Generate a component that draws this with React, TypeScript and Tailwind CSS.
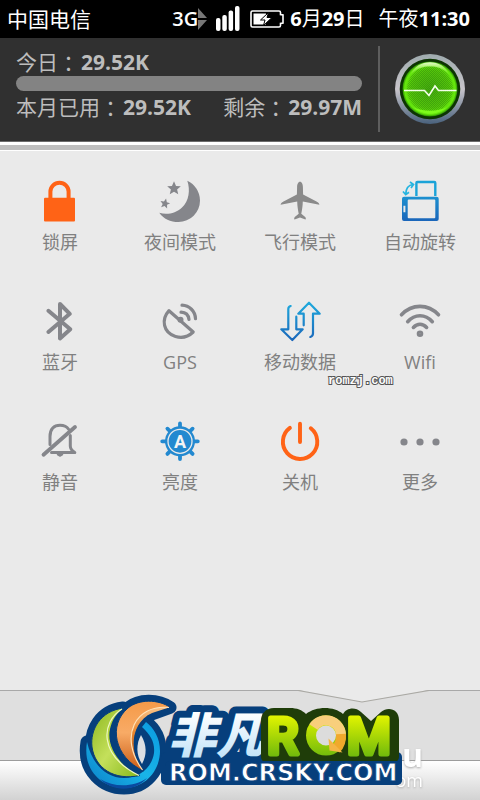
import type { ReactNode } from "react";

const GRAY = "#85868b";
const ORANGE = "#ff6316";

function Icon({ children }: { children: ReactNode }) {
  return (
    <svg viewBox="0 0 44 44" className="size-11" fill="none" aria-hidden="true">
      <defs>
        <linearGradient id="blue" x1="0" y1="0" x2="0" y2="44" gradientUnits="userSpaceOnUse">
          <stop offset="0" stopColor="#1fb0e0" />
          <stop offset="1" stopColor="#1a62b8" />
        </linearGradient>
      </defs>
      {children}
    </svg>
  );
}

const STAR =
  "M0-1L.28-.36 .95-.31 .43.13 .59.81 0 .45-.59.81-.43.13-.95-.31-.28-.36Z";

const toggles: { label: string; icon: ReactNode }[] = [
  {
    label: "锁屏",
    icon: (
      <>
        <rect x="6" y="18.7" width="31" height="23.8" rx="1" fill={ORANGE} />
        <path d="M12.4 20v-7.200a9.100 9.100 0 0 1 18.200 0V20" stroke={ORANGE} strokeWidth="4" />
      </>
    ),
  },
  {
    label: "夜间模式",
    icon: (
      <g fill={GRAY}>
        <path d="M29.300 1.700A22 22 0 0 1 42 21.500A21.500 21.500 0 0 1 20.500 43C12.500 43 5.500 40 1.300 33.700C9 36.500 18 34 24 28.500C31 22 32.500 11 29.300 1.700Z" />
        <path d={STAR} transform="translate(16 9.500) scale(7.200)" />
        <path d={STAR} transform="translate(7 24.700) rotate(12) scale(5.200)" />
      </g>
    ),
  },
  {
    label: "飞行模式",
    icon: (
      <path
        d="M22 2.700c1.900 0 2.900 2.600 2.900 5.300l.2 7.500 13.400 6.900c1.800 1 2.900 2 2.900 3.400l-16.600-3.200c-.1 5-.8 8.500-1.500 12.200l3.900 3.200c.8.8.8 2.200.2 2.600L22 38.500l-5.400 2.100c-.6-.4-.6-1.800.2-2.600l3.900-3.200c-.7-3.700-1.400-7.200-1.500-12.200L2.600 25.800c0-1.400 1.100-2.400 2.900-3.400l13.400-6.900.2-7.500c0-2.700 1-5.300 2.900-5.300Z"
        fill="#8a8a8a"
      />
    ),
  },
  {
    label: "自动旋转",
    icon: (
      <>
        <path
          fillRule="evenodd"
          d="M6 17.700h32.700a2 2 0 0 1 2 2V40a2 2 0 0 1-2 2H6a2 2 0 0 1-2-2V19.700a2 2 0 0 1 2-2ZM10.700 20.500a1 1 0 0 0-1 1v16.800a1 1 0 0 0 1 1h25.600a1 1 0 0 0 1-1V21.500a1 1 0 0 0-1-1ZM5.400 26.700v6.600h2v-6.600Z"
          fill="url(#blue)"
        />
        <path d="M18.400 17V4a1 1 0 0 1 1-1h16.900a1 1 0 0 1 1 1v13" stroke="#1ba3d8" strokeWidth="2.400" />
        <path d="M15 5.500C11 6 8 9.500 7.700 15M12 3l3.500 2.500L13 9M5 12.500l2.700 3.200 3.300-2.500" stroke="#25b4e0" strokeWidth="1.700" />
      </>
    ),
  },
  {
    label: "蓝牙",
    icon: (
      <path
        d="M10.400 11.800L32.300 30.300 22 39.400V5L31.800 14.800 10.400 33"
        stroke={GRAY}
        strokeWidth="4"
        strokeLinecap="round"
        strokeLinejoin="round"
      />
    ),
  },
  {
    label: "GPS",
    icon: (
      <g stroke={GRAY} strokeWidth="3.200" strokeLinecap="round" strokeLinejoin="round">
        <path d="M11 11.700L35.200 33C30 38 24 39.500 17.500 37.500C5 33.500 3 20.500 11 11.700Z" />
        <circle cx="22.500" cy="20.800" r="1.400" />
        <path d="M23 13.200c4.500.2 7.500 3 8 7.300M24 6.200c7.500.3 13.200 6 13.500 13.500" />
      </g>
    ),
  },
  {
    label: "移动数据",
    icon: (
      <path
        d="M12.700 7c-1.600.4-2.400 1.400-2.400 3v20.300h-7L14.300 41l10.400-10.700h-6.400V17.700M25.700 26.300V14.700h-5.400L31 3.700l10.700 11H35v19.600c0 2-.8 3.200-2.700 3.700"
        stroke="url(#blue)"
        strokeWidth="2.200"
        strokeLinecap="round"
        strokeLinejoin="round"
      />
    ),
  },
  {
    label: "Wifi",
    icon: (
      <g stroke={GRAY} strokeWidth="3.600" strokeLinecap="round">
        <path d="M3.500 15.800C14 4.600 30 4.600 40.500 15.800M9.700 22.700c7-8 17.600-8 24.600 0M15.400 28.400c4-4.200 9.200-4.200 13.200 0" />
        <circle cx="22" cy="34.700" r="1.500" />
      </g>
    ),
  },
  {
    label: "静音",
    icon: (
      <g stroke={GRAY} strokeWidth="3" strokeLinecap="round" strokeLinejoin="round">
        <path d="M12 25.500V17.500C12 10 16 6.200 22 6.200c4 0 7 1.500 8.600 4M32.300 16.500V27c0 3 2 5 4.500 6.600H13.500" />
        <path d="M19.500 35.600h5L22 37Z" fill={GRAY} strokeWidth="1.500" />
        <path d="M5.500 35.700L37 8" strokeWidth="3.800" />
      </g>
    ),
  },
  {
    label: "亮度",
    icon: (
      <>
        <path
          d="M22 4.500v35.600M4.200 22.300h35.600M9.400 9.700l25.200 25.200M34.600 9.700L9.400 34.900"
          stroke="#2389d0"
          strokeWidth="3.800"
          strokeLinecap="round"
        />
        <circle cx="22" cy="22.300" r="15" fill="#2389d0" />
        <circle cx="22" cy="22.300" r="12" stroke="#eaeaea" strokeWidth="1.300" />
        <text
          x="22"
          y="28.500"
          textAnchor="middle"
          fill="#f4f4f4"
          className="font-['Roboto',sans-serif] text-[18px] font-bold"
        >
          A
        </text>
      </>
    ),
  },
  {
    label: "关机",
    icon: (
      <path
        d="M11.900 8.900A17.200 17.200 0 1 0 32.800 9.300M22 4.800V23"
        stroke={ORANGE}
        strokeWidth="3.900"
        strokeLinecap="round"
      />
    ),
  },
  {
    label: "更多",
    icon: (
      <g fill={GRAY}>
        <circle cx="6" cy="23" r="3.600" />
        <circle cx="22" cy="23" r="3.600" />
        <circle cx="38" cy="23" r="3.600" />
      </g>
    ),
  },
];

function StatusBar() {
  return (
    <div className="flex h-[38px] items-center bg-black pr-[10px] pl-[7px] text-[20px] leading-6 text-white">
      <span className="text-[21px]">中国电信</span>
      <div className="ml-auto flex items-center">
        <span className="font-semibold">3G</span>
        <svg viewBox="0 0 10 22" className="h-[22px] w-[10px]" fill="#777" aria-hidden="true">
          <path d="M0 0l9 10H0ZM0 12h9L0 22Z" />
        </svg>
        <svg viewBox="0 0 24 26" className="ml-2 h-[26px] w-6" fill="#fff" aria-hidden="true">
          <rect x="0" y="12" width="4.500" height="13" rx="2" />
          <rect x="6.300" y="9" width="4.500" height="16" rx="2" />
          <rect x="12.600" y="4.500" width="4.500" height="20.500" rx="2" />
          <rect x="19" y="0" width="4.500" height="25" rx="2" />
        </svg>
        <svg viewBox="0 0 34 18" className="ml-[10px] h-[18px] w-[34px]" aria-hidden="true">
          <path d="M2.500 1H29a1.500 1.500 0 0 1 1.500 1.500V4.500L33 5v8l-2.500.5v2A1.500 1.500 0 0 1 29 17H2.500A1.500 1.500 0 0 1 1 15.500v-13A1.500 1.500 0 0 1 2.500 1Z" fill="none" stroke="#fff" strokeWidth="1.600" />
          <path d="M3.500 3.500h12.500v11H3.500Z" fill="#fff" />
          <path d="M18.500 2.500l-8 7.500h4.500l-1.500 5.500 8.500-8h-5Z" fill="#fff" stroke="#000" strokeWidth="1" />
        </svg>
        <span className="ml-[6px]">
          <b>6</b>月<b>29</b>日
        </span>
        <span className="ml-[14px]">
          午夜<b>11:30</b>
        </span>
      </div>
    </div>
  );
}

function PulseButton() {
  return (
    <button type="button" aria-label="流量监控" className="shrink-0 rounded-full">
      <svg viewBox="0 0 70 70" className="size-[70px]" aria-hidden="true">
        <defs>
          <linearGradient id="rim" x1="0" y1="0" x2="0" y2="1">
            <stop offset="0" stopColor="#9fabae" />
            <stop offset=".5" stopColor="#c9c5cb" />
            <stop offset="1" stopColor="#49617c" />
          </linearGradient>
          <radialGradient id="glow" cx=".5" cy=".5" r=".5">
            <stop offset="0" stopColor="#46ad10" />
            <stop offset=".7" stopColor="#55c60c" />
            <stop offset=".92" stopColor="#66ea0c" />
            <stop offset="1" stopColor="#2a8a04" />
          </radialGradient>
          <linearGradient id="shine" x1="0" y1="0" x2="0" y2="1">
            <stop offset="0" stopColor="#efffd8" stopOpacity=".95" />
            <stop offset="1" stopColor="#9df74a" stopOpacity="0" />
          </linearGradient>
          <pattern id="mesh" width="2" height="2" patternUnits="userSpaceOnUse">
            <rect width="1" height="1" fill="#1c6604" fillOpacity=".3" />
            <rect x="1" y="1" width="1" height="1" fill="#1c6604" fillOpacity=".3" />
          </pattern>
        </defs>
        <circle cx="35" cy="35" r="35" fill="url(#rim)" />
        <circle cx="35" cy="35" r="30.300" fill="#0d3503" />
        <circle cx="35" cy="35" r="27.500" fill="url(#glow)" />
        <circle cx="35" cy="35" r="23" fill="url(#mesh)" />
        <path d="M15 22C19 12 27 8.300 35 8.300S51 12 55 22C49 14 42 12.500 35 12.500S21 14 15 22Z" fill="url(#shine)" />
        <path d="M18 53c9 9 25 9 34 0-9 5-25 5-34 0Z" fill="#7dfb1b" />
        <path d="M9 36.500h20.500l4.500 5 6-9.500 3.500 4.500H61.500" fill="none" stroke="#f3ffea" strokeWidth="1.600" />
      </svg>
    </button>
  );
}

function Reading({ name, value }: { name: string; value: string }) {
  return (
    <p className="flex h-6 items-center">
      {name}
      <span className="mr-[2px] font-['Noto_Sans_CJK_TC',sans-serif]">：</span>
      <b>{value}</b>
    </p>
  );
}

function Usage() {
  return (
    <header className="flex items-start border-b border-[#6b6b6b] bg-[#303030] pr-[15px] pb-[9px] pl-4 text-[#bdbdbd]">
      <div className="min-w-0 flex-1 pt-3 text-[21px] leading-6">
        <Reading name="今日" value="29.52K" />
        <div
          role="progressbar"
          aria-label="今日"
          aria-valuenow={0}
          className="mt-[2px] h-[15px] rounded-full bg-[#838383]"
        />
        <div className="mt-1 flex justify-between">
          <Reading name="本月已用" value="29.52K" />
          <Reading name="剩余" value="29.97M" />
        </div>
      </div>
      <div className="mt-2 ml-4 h-[86px] w-[2px] bg-[#5e5e5e]" />
      <div className="mt-4 ml-[15px] flex">
        <PulseButton />
      </div>
    </header>
  );
}

function Logo() {
  return (
    <svg viewBox="78 690 324 110" className="h-[110px] w-[324px]" role="img" aria-label="非凡ROM">
      <defs>
        <linearGradient id="lime" x1="0" y1="0" x2="1" y2="1">
          <stop offset="0" stopColor="#8cb71e" />
          <stop offset=".5" stopColor="#c4e05b" />
          <stop offset="1" stopColor="#86b81a" />
        </linearGradient>
        <linearGradient id="amber" x1="0" y1="0" x2="0" y2="1">
          <stop offset="0" stopColor="#f59a48" />
          <stop offset=".45" stopColor="#f8ab66" />
          <stop offset="1" stopColor="#c95a14" />
        </linearGradient>
        <linearGradient id="ember" x1="0" y1="0" x2="0" y2="1">
          <stop offset="0" stopColor="#f9c48a" />
          <stop offset=".4" stopColor="#e8862e" />
          <stop offset="1" stopColor="#a8400a" />
        </linearGradient>
        <linearGradient id="sea" x1="0" y1="1" x2="1" y2="0">
          <stop offset="0" stopColor="#0b7fc8" />
          <stop offset=".5" stopColor="#19b4e8" />
          <stop offset="1" stopColor="#0a9ae0" />
        </linearGradient>
        <linearGradient id="ice" x1="0" y1="712" x2="0" y2="760" gradientUnits="userSpaceOnUse">
          <stop offset="0" stopColor="#fff" />
          <stop offset="1" stopColor="#bfe2f8" />
        </linearGradient>
        <linearGradient id="grass" x1="0" y1="715" x2="0" y2="758" gradientUnits="userSpaceOnUse">
          <stop offset="0" stopColor="#e4f500" />
          <stop offset="1" stopColor="#6cb80c" />
        </linearGradient>
      </defs>

      {/* emblem */}
      <g fill="#063f7c" stroke="#063f7c" strokeWidth="13" strokeLinejoin="round">
        <path d="M87 742C82 772 104 788 124 788C146 788 160 770 160 751C160 738 154 728 146 722L134 742C132 756 136 764 144 772Z" />
        <path d="M123 708C100 711 90 730 92 748C95 768 112 782 140 776Z" />
        <path d="M170 707.500C158 699 139 699 128 708C108 725 116 758 143.500 770.500C130 754 132 722 152 714Z" />
      </g>
      <path d="M87 742C82 772 104 788 124 788C146 788 160 770 160 751C160 738 154 728 146 722L142 727C151 735 155 743 154 753C152 767 140 778 124 778C106 778 92 764 87 742Z" fill="url(#sea)" />
      <path d="M100 779c15 9 34 8 47-1-12 14-34 14-47 1Z" fill="#0a4aa0" />
      <path d="M141 735c-5 9-5 20 1 29 5-9 5-19-1-29Z" fill="#dcdfe2" />
      <path
        d="M123.500 708C100 711 90 730 92 747C95 768 114 781 140 775.500C118 766 106 744 110 729C112 720 116 714 123.500 708Z"
        fill="url(#lime)"
        stroke="#063f7c"
        strokeWidth="1"
      />
      <path d="M122 709C101 722 98 755 139 775.500C118 766 106 744 110 729C112 720 116 714 122 709Z" fill="#b5d63c" />
      <path d="M122 709C101 722 98 755 139 775.500" fill="none" stroke="#eef7c4" strokeWidth="1.200" />
      <path
        d="M170.500 707.500C158 699 139 699 128 708C108 725 114 757 143.500 771C128 752 131 722 152 713C157 710 164 708 170.500 707.500Z"
        fill="url(#amber)"
        stroke="#063f7c"
        strokeWidth="1"
      />
      <path d="M169 707.500C136 704 118 736 142.500 770C128 752 131 722 152 713Z" fill="url(#ember)" />
      <path d="M169 707.500C136 704 118 736 142.500 770" fill="none" stroke="#ffe2b8" strokeWidth="1.200" />

      {/* site name */}
      <rect x="161" y="752" width="241" height="33" rx="5" fill="#063f7c" />
      <text
        x="168"
        y="753"
        fill="url(#ice)"
        stroke="#063f7c"
        strokeWidth="14"
        strokeLinejoin="round"
        paintOrder="stroke"
        className="font-['Noto_Sans_CJK_SC',sans-serif] text-[48px] font-black italic"
      >
        非凡
      </text>
      <path
        d="M261 722c0-9 5-14 13-14h16c7 0 12 2 16 6 10-8 28-8 37 0 3-6 12-8 18-2l10 9 10-9c7-6 18-3 18 8v36c0 4-2 6-5 6H266c-3 0-5-2-5-6Z"
        fill="#1f3d09"
      />
      <g
        fill="url(#grass)"
        stroke="url(#grass)"
        strokeWidth="5"
        strokeLinejoin="round"
        className="font-['Roboto',sans-serif] text-[50px] font-medium"
      >
        <text x="267" y="754">R</text>
        <text x="347" y="754">M</text>
      </g>
      <circle cx="326" cy="735.500" r="15" fill="#dcdcdc" stroke="url(#grass)" strokeWidth="10" />
      <path d="M313.500 727A15 15 0 0 1 341 735" fill="none" stroke="#f8cf7c" strokeWidth="10" />
      <path d="M341 734C341.500 741 340 745 336 749" fill="none" stroke="#f0a92c" strokeWidth="10" />
      <path d="M328.500 738.500l1 12 13 2-4-4Z" fill="#f4b545" />
      <rect x="165" y="761" width="237" height="24" rx="5" fill="#063f7c" />
      <text x="169" y="781" fill="#fff" className="font-['DejaVu_Sans',sans-serif] text-[24px] font-bold" stroke="#063f7c" strokeWidth=".8">
        ROM.CRSKY.COM
      </text>
    </svg>
  );
}

function Dock() {
  return (
    <footer className="relative h-[110px] bg-[#dfdfdf]">
      <div className="h-[70px] border-t border-[#a8a8a8]" />
      <div className="h-10 border-t border-[#9c9c9c] bg-linear-to-b from-white to-[#d2d2d2]" />
      {/* pull-down notch */}
      <svg viewBox="0 0 132 14" className="absolute top-0 left-[62%] h-[14px] w-[132px]" aria-hidden="true">
        <path d="M0 0L64 12 131 0Z" fill="#eaeaea" />
        <path d="M0 .5L64 12 131 .5" fill="none" stroke="#aaa9a4" strokeWidth="1.200" />
      </svg>
      <div className="absolute top-12 right-[57px] text-right text-white drop-shadow-[0_1px_1px_#aaa]">
        <p className="text-[32px] leading-[34px] font-bold">u</p>
        <p className="text-[18px] leading-4">om</p>
      </div>
      <div className="absolute inset-x-0 top-0 flex justify-center">
        <Logo />
      </div>
    </footer>
  );
}

export default function App() {
  return (
    <div className="flex min-h-screen flex-col bg-[#eaeaea] font-['Open_Sans','Noto_Sans_CJK_SC',sans-serif]">
      <StatusBar />
      <Usage />
      <div className="h-[9px] border-t-3 border-b border-white bg-[#bebebe]" />
      <main className="relative grid grid-cols-4 gap-y-[46px] pt-7">
        {toggles.map(({ label, icon }) => (
          <button key={label} type="button" className="flex flex-col items-center">
            <Icon>{icon}</Icon>
            <span className="mt-2 text-[18px] leading-[22px] text-[#808080]">{label}</span>
          </button>
        ))}
        <svg viewBox="0 0 72 18" className="absolute top-[220px] left-[68%] h-[18px] w-[72px]">
          <text
            x="2"
            y="13"
            fill="#fff"
            stroke="#555"
            strokeWidth="2"
            paintOrder="stroke"
            className="font-['Liberation_Mono',monospace] text-[12px] font-bold"
          >
            romzj.com
          </text>
        </svg>
      </main>
      <div className="flex-1" />
      <Dock />
    </div>
  );
}
